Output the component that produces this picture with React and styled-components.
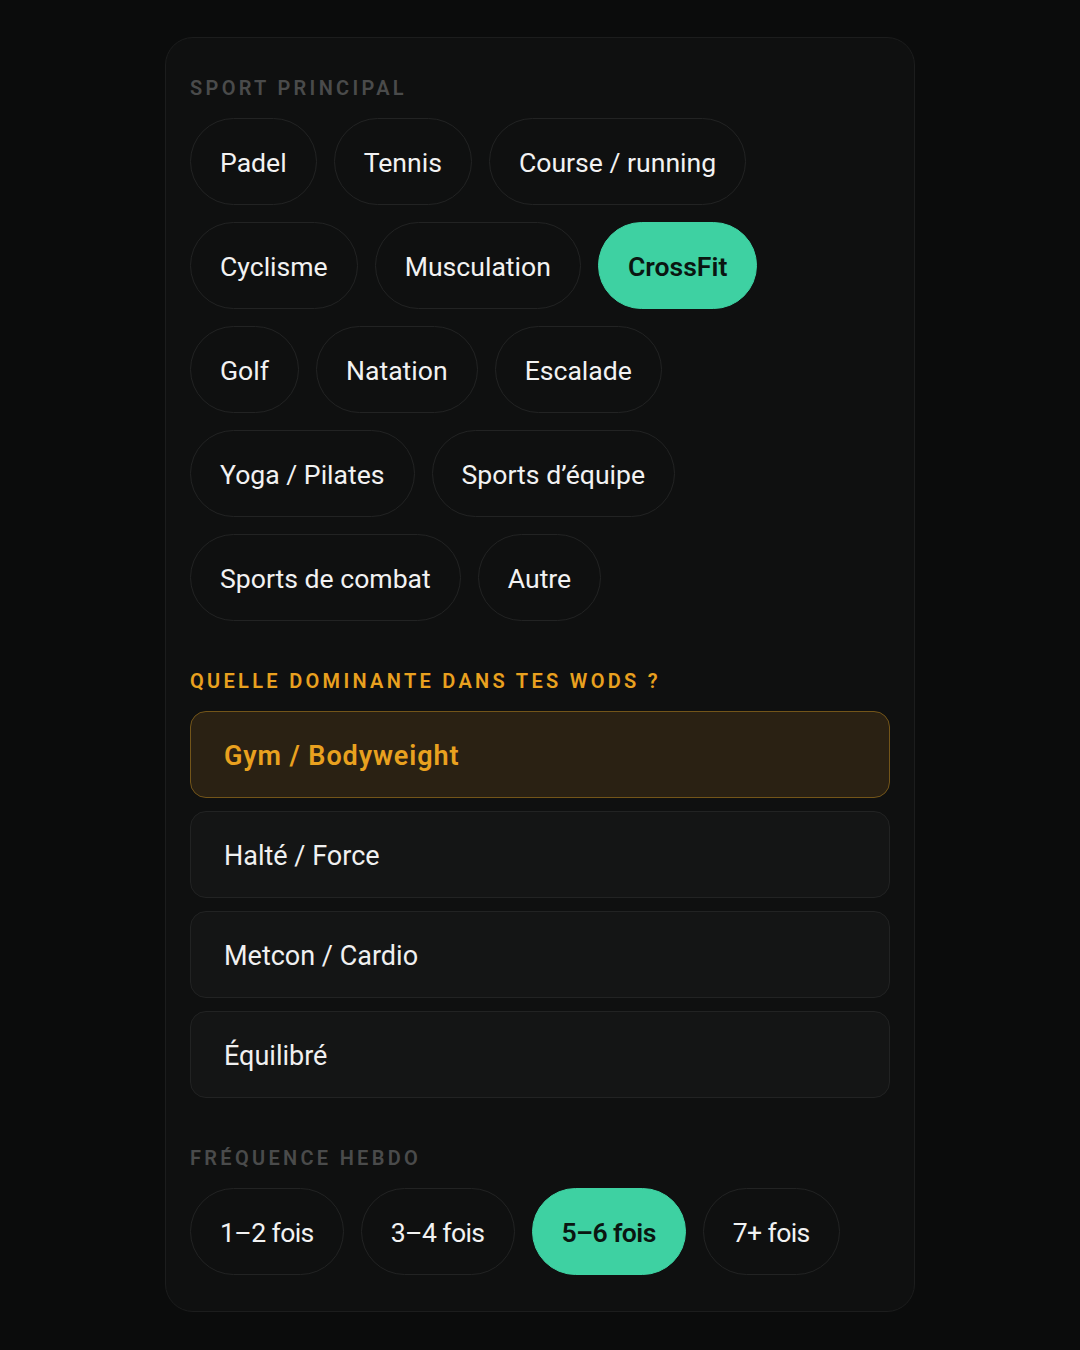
import React, { useState } from 'react';
import styled, { createGlobalStyle } from 'styled-components';

const sports = [
   ['Padel', 'Tennis', 'Course / running'],
   ['Cyclisme', 'Musculation', 'CrossFit'],
   ['Golf', 'Natation', 'Escalade'],
   ['Yoga / Pilates', 'Sports d’équipe'],
   ['Sports de combat', 'Autre'],
];

const dominantes = ['Gym / Bodyweight', 'Halté / Force', 'Metcon / Cardio', 'Équilibré'];
const frequences = ['1–2 fois', '3–4 fois', '5–6 fois', '7+ fois'];

const App = () => {
   const [sport, setSport] = useState('CrossFit');
   const [dominante, setDominante] = useState('Gym / Bodyweight');
   const [frequence, setFrequence] = useState('5–6 fois');

   return (
      <Page>
         <GlobalStyle />
         <Card>
            <Section>
               <Label>Sport principal</Label>
               <ChipWrap>
                  {sports.map((row, i) => (
                     <ChipRow key={i}>
                        {row.map(s => (
                           <Chip key={s} active={sport === s} onClick={() => setSport(s)}>
                              {s}
                           </Chip>
                        ))}
                     </ChipRow>
                  ))}
               </ChipWrap>
            </Section>

            <Section>
               <Label accent>Quelle dominante dans tes WODs ?</Label>
               <OptionList>
                  {dominantes.map(d => (
                     <Option key={d} active={dominante === d} onClick={() => setDominante(d)}>
                        {d}
                     </Option>
                  ))}
               </OptionList>
            </Section>

            <Section>
               <Label>Fréquence hebdo</Label>
               <ChipRow>
                  {frequences.map(f => (
                     <Chip key={f} tight active={frequence === f} onClick={() => setFrequence(f)}>
                        {f}
                     </Chip>
                  ))}
               </ChipRow>
            </Section>
         </Card>
      </Page>
   );
};

export default App;

const GlobalStyle = createGlobalStyle`
   html, body {
      margin: 0;
      padding: 0;
      background-color: #0b0c0c;
   }

   body {
      font-family: Roboto, "Liberation Sans", sans-serif;
      -webkit-font-smoothing: antialiased;
   }

   * {
      box-sizing: border-box;
   }
`;

const Page = styled.div`
   min-height: 1350px;
   display: flex;
   justify-content: center;
   align-items: flex-start;
   padding-top: 37px;
   background-color: #0b0c0c;
`;

const Card = styled.div`
   width: 750px;
   display: flex;
   flex-direction: column;
   gap: 49px;
   padding: 39px 24px 36px;
   border: 1px solid #1c1d1d;
   border-radius: 28px;
   background-color: #0f1010;
`;

const Section = styled.div`
   display: flex;
   flex-direction: column;
   gap: 19px;
`;

const Label = styled.div`
   font-size: 20px;
   line-height: 22px;
   font-weight: 600;
   letter-spacing: 3.3px;
   text-transform: uppercase;
   color: ${({ accent }) => (accent ? '#e9a11f' : '#4a4b4b')};
`;

const ChipWrap = styled.div`
   display: flex;
   flex-direction: column;
   gap: 17px;
`;

const ChipRow = styled.div`
   display: flex;
   flex-wrap: wrap;
   gap: 17px;
`;

const Chip = styled.button`
   height: 87px;
   padding: 2px 29px 0;
   border-radius: 44px;
   border: 1px solid ${({ active }) => (active ? '#3ed1a2' : '#222323')};
   background-color: ${({ active }) => (active ? '#3ed1a2' : 'transparent')};
   color: ${({ active }) => (active ? '#0a1611' : '#f2f2f2')};
   font-family: inherit;
   font-size: 26.6px;
   font-weight: ${({ active }) => (active ? 600 : 400)};
   letter-spacing: ${({ tight }) => (tight ? '-0.6px' : '0')};
   cursor: pointer;
`;

const OptionList = styled.div`
   display: flex;
   flex-direction: column;
   gap: 13px;
`;

const Option = styled.div`
   height: 87px;
   display: flex;
   align-items: center;
   padding: 2px 33px 0;
   border-radius: 16px;
   border: 1px solid ${({ active }) => (active ? '#735519' : '#222323')};
   background-color: ${({ active }) => (active ? '#2a2113' : '#141515')};
   color: ${({ active }) => (active ? '#e9a11f' : '#f0f0f0')};
   font-size: 27px;
   font-weight: ${({ active }) => (active ? 600 : 400)};
   letter-spacing: ${({ active }) => (active ? '0.9px' : '0')};
   cursor: pointer;
`;
